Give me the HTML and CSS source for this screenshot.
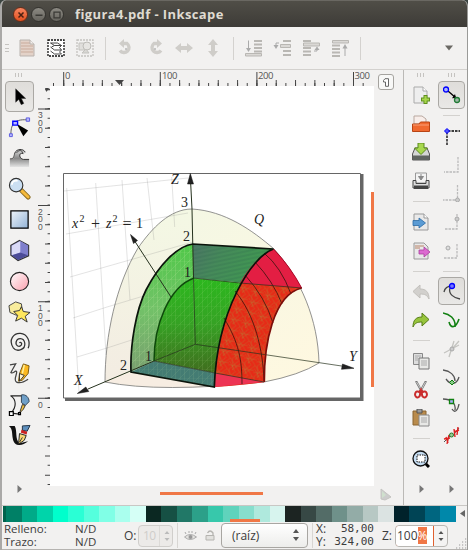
FILE: index.html
```html
<!DOCTYPE html>
<html lang="es">
<head>
<meta charset="utf-8">
<title>figura4.pdf - Inkscape</title>
<link rel="stylesheet" href="styles.css">
</head>
<body>
<div class="window">
  <header class="titlebar">
    <span class="wbtn close"><svg width="14" height="14" viewBox="0 0 14 14"><path d="M4.5 4.5l5 5M9.5 4.5l-5 5" stroke="#4c2012" stroke-width="1.5"/></svg></span>
    <span class="wbtn"><svg width="14" height="14" viewBox="0 0 14 14"><path d="M3.5 7.2h7" stroke="#3b3a36" stroke-width="1.5"/></svg></span>
    <span class="wbtn"><svg width="14" height="14" viewBox="0 0 14 14"><path d="M4 4.2h6v5.6H4z" fill="none" stroke="#3b3a36" stroke-width="1.3"/></svg></span>
    <h1>figura4.pdf - Inkscape</h1>
  </header>

  <div class="toolbar">
    <i class="grip"></i>
    <svg class="tb" viewBox="0 0 18 18"><path d="M2 1h10l4 4v12H2z" fill="#e3d2c8" stroke="#b9b3ae"/><path d="M3 4h9M3 7h12M3 10h12M3 13h12" stroke="#c9ab9b" stroke-width="1"/><path d="M12 1v4h4" fill="#f4efec" stroke="#b9b3ae"/></svg>
    <svg class="tb" viewBox="0 0 18 18"><rect x="1" y="1" width="16" height="16" fill="#fff" stroke="#111" stroke-width="1.3" stroke-dasharray="2 1"/><path d="M3.500 4h7l4 2.500H7.500zM3.500 8l4 3h7M3.500 12l4 3h7M7.500 6.500l-3 1.500M14.500 6.500l-2 2 2 2.500-2 2 2 2" fill="none" stroke="#333" stroke-width=".9"/></svg>
    <svg class="tb" viewBox="0 0 18 18"><rect x="1" y="1" width="16" height="16" fill="none" stroke="#c3c2be" stroke-width="1.3" stroke-dasharray="2 1"/><path d="M3 4h6v7H3z" fill="#e0dfdc" stroke="#c3c2be"/><circle cx="11" cy="7" r="4" fill="#e6e5e2" stroke="#bdbcb8"/><path d="M6 14l4-4 3 4z" fill="#d8d7d3" stroke="#c3c2be"/></svg>
    <i class="vsep"></i>
    <svg class="tb" viewBox="0 0 18 18"><path d="M6 4.500h4a5 5 0 1 1-7 7" fill="none" stroke="#cfcdc9" stroke-width="3.400"/><path d="M7 0v9L2 4.500z" fill="#cfcdc9"/><circle cx="9" cy="10" r="1.100" fill="#bbb"/></svg>
    <svg class="tb" viewBox="0 0 18 18"><path d="M12 4.500H8a5 5 0 1 0 7 7" fill="none" stroke="#cfcdc9" stroke-width="3.400"/><path d="M11 0v9l5-4.500z" fill="#cfcdc9"/><circle cx="9" cy="10" r="1.100" fill="#bbb"/></svg>
    <svg class="tb" viewBox="0 0 18 18"><path d="M0 9l6-5v3h6V4l6 5-6 5v-3H6v3z" fill="#cfcdc9"/></svg>
    <svg class="tb" viewBox="0 0 18 18"><path d="M9 0l5 6h-3v6h3l-5 6-5-6h3V6H4z" fill="#cfcdc9"/></svg>
    <i class="vsep"></i>
    <svg class="tb" viewBox="0 0 18 18"><path d="M10 2h8M10 5.500h8M10 9h8M10 12.500h8" stroke="#b9b7b3" stroke-width="2.200"/><path d="M1.500 14.500h16v2.500h-16z" fill="#dad8d5" stroke="#b9b7b3"/><path d="M4.500 1.500v9" stroke="#aaa"/><path d="M2 9h5l-2.500 4z" fill="#aaa"/></svg>
    <svg class="tb" viewBox="0 0 18 18"><path d="M10 2h8M10 12h8M10 16h8" stroke="#b9b7b3" stroke-width="2.200"/><path d="M7.500 5.500h10v3h-10z" fill="#dad8d5" stroke="#b9b7b3"/><path d="M6 4H3v3" fill="none" stroke="#aaa"/><path d="M.5 6h5L3 10z" fill="#aaa"/></svg>
    <svg class="tb" viewBox="0 0 18 18"><path d="M1 2h8M1 9h8M1 12.500h8M1 16h8" stroke="#b9b7b3" stroke-width="2.200"/><path d="M1.500 4h16v3h-16z" fill="#dad8d5" stroke="#b9b7b3"/><path d="M12 12h3v-2" fill="none" stroke="#aaa"/><path d="M12.500 11h5L15 7.500z" fill="#aaa"/></svg>
    <svg class="tb" viewBox="0 0 18 18"><path d="M1 6.500h8M1 10h8M1 13.500h8M1 17h8" stroke="#b9b7b3" stroke-width="2.200"/><path d="M1.500 1.500h16V4h-16z" fill="#dad8d5" stroke="#b9b7b3"/><path d="M14 8v9" stroke="#aaa"/><path d="M11.500 9.500h5L14 5z" fill="#aaa"/></svg>
    <i class="vsep"></i>
    <svg class="more" viewBox="0 0 8 6"><path d="M0 .5h8L4 5.500z" fill="#6b6964"/></svg>
  </div>

  <main class="work">
    <nav class="toolbox">
      <i class="hgrip"></i>
      <span class="tool on"><svg viewBox="0 0 24 24"><path d="M8 4v14l3.200-3 2.600 5.500 2.700-1.300-2.500-5.200H18.500z" fill="#000" stroke="#333" stroke-width=".5"/></svg></span>
      <span class="tool"><svg viewBox="0 0 24 24"><path d="M3 20C3 10 5 3 20 4" fill="none" stroke="#555"/><path d="M9 8l12 7-5 6z" fill="#000"/><g fill="#b8b8ff" stroke="#5b5be0"><path d="M1.500 18.500h3v3h-3zM19 2h3.500v3.500H19z"/><path d="M5 5.500h5v4H5z" stroke="#00f" stroke-width="1.400"/></g></svg></span>
      <span class="tool"><svg viewBox="0 0 24 24"><defs><linearGradient id="tw" x2="0" y2="1"><stop stop-color="#ddd"/><stop offset=".5" stop-color="#888"/><stop offset="1" stop-color="#e4e4e4"/></linearGradient></defs><path d="M2 22v-8c4 0 5-3 5-6 0-5 9-6 11-1l-2 1c-4-2-5 5 0 6h6v8z" fill="url(#tw)"/><path d="M2 13.500c4 0 4-2 5-6 2-5 9-5 11-1M9 7c3-4 7-2 6 1M16 8c-5-2-5 5 0 6h6" fill="none" stroke="#333"/></svg></span>
      <span class="tool"><svg viewBox="0 0 24 24"><path d="M14 14l7 7" stroke="#8a6a20" stroke-width="5" stroke-linecap="round"/><path d="M14.500 14.500l6.500 6.300" stroke="#f5b93a" stroke-width="3" stroke-linecap="round"/><circle cx="8.500" cy="8.500" r="7" fill="#cbdff2" stroke="#333" stroke-width="1.200"/><path d="M4 8c0-3 3-5 6-4" fill="none" stroke="#fff" stroke-width="2"/></svg></span>
      <span class="tool"><svg viewBox="0 0 24 24"><defs><linearGradient id="bl" x2="1" y2="1"><stop stop-color="#eef4fa"/><stop offset="1" stop-color="#93b3d6"/></linearGradient></defs><path d="M3 3h18v18H3z" fill="url(#bl)" stroke="#000" stroke-width="1.300"/></svg></span>
      <span class="tool"><svg viewBox="0 0 24 24"><path d="M12 1.500l9.500 5v11l-11 5L3 17V6.500z" fill="#9898dc" stroke="#333" stroke-width="1.200"/><path d="M13 2v12L4 17V7z" fill="#dadaf6"/><path d="M13 2l8 5v10l-8-3z" fill="#7f7fcc"/><path d="M4 17l9-3 8 3-10.500 5z" fill="#4c4c98"/></svg></span>
      <span class="tool"><svg viewBox="0 0 24 24"><defs><linearGradient id="pk" x2="1" y2="1"><stop stop-color="#fff"/><stop offset="1" stop-color="#fba0ae"/></linearGradient></defs><circle cx="12" cy="12" r="9.500" fill="url(#pk)" stroke="#222" stroke-width="1.200"/></svg></span>
      <span class="tool"><svg viewBox="0 0 24 24"><path d="M8 2l6 2 1 8-6 4-7-3-1-7z" fill="#f8ec9c" stroke="#444"/><path d="M14 7l2 5 7 1-5 4 2 6-6-4-6 3 2-6-4-4 6-1z" fill="#ffe75c" stroke="#333"/></svg></span>
      <span class="tool"><svg viewBox="0 0 24 24"><path d="M12 12.500c1-1.500 3 0 2 2-2 3-6.500 1-5.500-3 1-5 8-5 9 1 1 7-8 10-12 5C0 9 6 2 13 2.500 20 3 24 11 21 18" fill="none" stroke="#333" stroke-width="1.300"/></svg></span>
      <span class="tool"><svg viewBox="0 0 24 24"><path d="M2 3l6-1-5 9c2 2 5-3 6-1s-4 9 0 11 9-1 12-3" fill="none" stroke="#444" stroke-width="1.300"/><path d="M12 12l4-10 6 2-1 8-6 7-4 1z" fill="#fbb820" stroke="#7a5a10"/><path d="M12 12l5 2-5 6z" fill="#fff3d0" stroke="#333"/><path d="M17 3l-2 9" stroke="#fff1a0" stroke-width="1.500"/></svg></span>
      <span class="tool"><svg viewBox="0 0 24 24"><path d="M2.500 3h12M3 3c6 4 6 12 0 18l9 1" fill="none" stroke="#222" stroke-width="1.200"/><path d="M14 2c5-1 8 3 8 7l-4 4-4-3z" fill="#6e9fc8" stroke="#345"/><path d="M15 12l3 1-2 4-4 4z" fill="#f0c040" stroke="#333"/><path d="M1.500 19.500h4v4h-4zM11 20.500h2v2h-2z" fill="#fff" stroke="#000" stroke-width="1.300"/></svg></span>
      <span class="tool"><svg viewBox="0 0 24 24"><path d="M1 2h6c3 5 0 14 5 18l9-2c-7 6-15 5-16-3C4 10 5 5 1 2z" fill="#111"/><path d="M15 2l8-.5-3 6-5-1z" fill="#5d8fbd" stroke="#234"/><path d="M14 6l6 2-.5 3-6-2z" fill="#c22"/><path d="M12 10l7 2-2 5-6 4z" fill="#f7d774" stroke="#222"/><path d="M12 19l3-5" stroke="#333"/></svg></span>
      <svg class="expander" viewBox="0 0 5 8"><path d="M.5 0v8l4.500-4z" fill="#777"/></svg>
    </nav>

    <section class="stage">
      <svg class="ruler-h" width="338" height="16" viewBox="36 70 338 16">
        <path d="M63.200 84.500H370" stroke="#444" stroke-width="3" stroke-dasharray="1 8.660" fill="none"/>
        <path d="M63.200 83H370" stroke="#444" stroke-width="6" stroke-dasharray="1 18.320" fill="none"/>
        <path d="M63.200 79H370" stroke="#444" stroke-width="14" stroke-dasharray="1 95.600" fill="none"/>
        <path d="M53.500 86v-3" stroke="#444"/>
        <path d="M115 80h9l-4.500 5z" fill="#444"/>
        <g class="rnum"><text x="65" y="78.500">0</text><text x="162" y="78.500">100</text><text x="258" y="78.500">200</text><text x="354.500" y="78.500">300</text></g>
      </svg>
      <svg class="ruler-v" width="14" height="400" viewBox="36 86 14 400">
        <path d="M48.800 398.200V86" stroke="#444" stroke-width="2.400" stroke-dasharray="1 8.640" fill="none"/>
        <path d="M47.500 398.700V86M47.500 397.700V486" stroke="#444" stroke-width="5" stroke-dasharray="1 18.280" fill="none"/>
        <path d="M48.800 406.900V486" stroke="#444" stroke-width="2.400" stroke-dasharray="1 18.280" fill="none"/>
        <path d="M44 398.700V86" stroke="#444" stroke-width="12" stroke-dasharray="1 95.400" fill="none"/>
        <path d="M45 88h4l-2.500 4z" fill="#444"/>
        <g class="vnum"><text x="38" y="118">3</text><text x="38" y="125.500">0</text><text x="38" y="133">0</text><text x="38" y="214.500">2</text><text x="38" y="222">0</text><text x="38" y="229.500">0</text><text x="38" y="311">1</text><text x="38" y="318.500">0</text><text x="38" y="326">0</text><text x="38" y="407.500">0</text></g>
      </svg>
      <svg class="canvas" width="324" height="400" viewBox="50 86 324 400">
        <defs>
          <linearGradient id="dome" x2="1" y2="1"><stop offset=".2" stop-color="#f4f7e4"/><stop offset="1" stop-color="#fff8e0"/></linearGradient>
          <linearGradient id="domeL" x2="0" y2="1"><stop stop-color="#f4f8e4"/><stop offset="1" stop-color="#f3ece2"/></linearGradient>
          <linearGradient id="lune" x2="0" y2="1"><stop stop-color="#4fc848"/><stop offset=".5" stop-color="#72c268"/><stop offset="1" stop-color="#7aa070"/></linearGradient>
          <linearGradient id="core" x2="0" y2="1"><stop stop-color="#2cb81e"/><stop offset=".45" stop-color="#35a324"/><stop offset="1" stop-color="#416a1e"/></linearGradient>
          <linearGradient id="roof" x2="1" y2=".3"><stop stop-color="#4c7565"/><stop offset=".4" stop-color="#468a5a"/><stop offset="1" stop-color="#3f9a50"/></linearGradient>
          <pattern id="mesh" width="9" height="9" patternUnits="userSpaceOnUse"><path d="M0 0h9M0 0v9M0 9l9-9M4.500 0v9" stroke="#c8f0a8" stroke-width=".5" opacity=".35" fill="none"/></pattern>
          <pattern id="rmesh" width="13" height="11" patternUnits="userSpaceOnUse" patternTransform="rotate(17)"><path d="M0 0l13 11M13 0L5 11M0 7l13-2M2 0l4 11M0 3l8 8M9 0l-7 11" stroke="#b08838" stroke-width=".6" opacity=".55" fill="none"/></pattern>
          <pattern id="stripe" width="8" height="4" patternUnits="userSpaceOnUse" patternTransform="rotate(-12)"><path d="M0 1h8" stroke="#24604a" stroke-width="1" opacity=".35"/></pattern>
        </defs>
        <path d="M65 399.500h297V174" fill="none" stroke="#666" stroke-width="3"/>
        <path d="M63.500 173.500h297V398h-297z" fill="#fff" stroke="#666"/>
        <path d="M105 382C105 335 116 285 138 248C152 228 170 209 192 209C225 211 252 230 274 249C301 279 318 320 319 363Q300 375 264 382Q160 393 105 382z" fill="url(#dome)"/>
        <path d="M105 382C105 335 116 285 138 248C152 228 170 209 192 209L195 344z" fill="url(#domeL)"/>
        <path d="M105 382l26-10 84 15q-60 3-110-5z" fill="#f7ede2"/>
        <g fill="none" stroke="#8a8a8a" stroke-width=".7" opacity=".34"><path d="M66.700 188L79 393M95.700 183L106 355M122 180L130 300M147 178l7 62M171.700 177l3 50M64 191l124-13M66 234l122-21M70 277l123-35M73 318l34-11 50-15M77 357l30-9 40-13"/></g>
        <path d="M105 382C105 335 116 285 138 248C152 228 170 209 192 209C225 211 252 230 274 249C301 279 318 320 319 363Q300 375 264 382Q160 393 105 382z" fill="none" stroke="#777" stroke-width=".8"/>
        <path d="M131 372C130 345 136 310 146 290C159 265 177 246 193 244V278C169 287 154 325 154 361z" fill="url(#lune)"/>
        <path d="M131 372C130 345 136 310 146 290C159 265 177 246 193 244V278C169 287 154 325 154 361z" fill="url(#mesh)"/>
        <path d="M154 361C154 325 169 287 194 278L255 284 230 376z" fill="url(#core)"/>
        <path d="M154 361C154 325 169 287 194 278L255 284 230 376z" fill="url(#mesh)" opacity=".6"/>
        <path d="M193 244l80.500 5L260 284.500 193 278z" fill="url(#roof)"/>
        <path d="M193 244l80.500 5L260 284.500 193 278z" fill="url(#stripe)"/>
        <path d="M154 361l61 12-.7 14L131 372z" fill="#447c73"/>
        <path d="M154 361l61 12-.7 14L131 372z" fill="url(#mesh)" opacity=".5"/>
        <path d="M273.500 249C252 256 217 310 214.300 387Q245 385 264.300 382C264 345 273 295 301.700 288Q290 266 273.500 249z" fill="#e62b17"/>
        <path d="M240 283C227 303 217 340 215 373l49 9C264 345 273 295 301.700 288z" fill="url(#rmesh)"/>
        <path d="M273.500 249Q255 257 240 283l61.700 5Q290 266 273.500 249z" fill="#e31e43"/>
        <path d="M215 373l49.500 9-50 5z" fill="#ed3454"/>
        <g fill="none" stroke="#35150c" stroke-width=".8"><path d="M264 253Q281 267 291 294M255 262Q273 281 282 304M245 275Q265 297 273 323M235 291C255 315 263 350 264 381M224 318C239 343 242 360 242 384"/></g>
        <g fill="none" stroke="#26321e" stroke-width=".7">
          <path d="M193.500 278L195.300 344.300L154 361M195.300 344.300L345 366.500" />
          <path d="M193 278l47 5 62 5M154 361l61 12 49 9" stroke-width=".7"/>
          <path d="M190.500 180l1.500 29 1.500 69M154 361l-66 28" stroke-width="1"/>
          <path d="M134 240L171 297" stroke-width="1"/>
        </g>
        <g fill="none" stroke="#0b140b" stroke-width="1.700">
          <path d="M131 372C130 345 136 310 146 290C159 265 177 246 193 244L273.500 249C252 256 217 310 214.300 387z"/>
          <path d="M154 361C154 325 169 287 194 278" stroke-width="1.500" stroke="#0d4a0a"/>
          <path d="M264.300 382C264 345 273 295 301.700 288" stroke="#7c0d0a" stroke-width="1.700"/>
          <path d="M273.500 249Q290 266 301.700 288" stroke="#902" stroke-width=".8"/>
        </g>
        <g fill="#222" stroke="#111" stroke-width=".5"><path d="M190.300 173.500l3.200 10.500h-6zM354 368.300l-12.500 1 1-5.300zM77.300 393.500l8.500-6.500 3 4.500zM130.500 234.500l7 6-4 3z"/></g>
        <g class="math">
          <text x="171" y="183.500" class="it">Z</text><text x="254" y="224" class="it">Q</text><text x="349" y="361" class="it">Y</text><text x="74" y="385" class="it">X</text>
          <text x="181" y="207">3</text><text x="183" y="241">2</text><text x="184" y="276.500">1</text><text x="145" y="361">1</text><text x="120" y="369.500">2</text>
          <text x="72" y="227.500" class="it">x</text><text x="79.500" y="222" class="sup">2</text><text x="91" y="229" class="plus">+</text><text x="106" y="227.500" class="it">z</text><text x="112.500" y="222" class="sup">2</text><text x="122.500" y="229" class="plus">=</text><text x="136" y="227.500">1</text>
        </g>
      </svg>
      <div class="hscroll"><i></i></div>
    </section>

    <aside class="vscroll">
      <span class="zoomlock"><svg width="6" height="9" viewBox="0 0 6 9"><path d="M.5 2.500L2 .7h3.500v7.600H2.500V4h-2z" fill="#fff" stroke="#666"/></svg></span>
      <i class="thumb"></i>
      <svg class="cms" viewBox="0 0 12 13"><path d="M1 1l10 8-6 3-4-1z" fill="#ccc" stroke="#c4c4c0"/><path d="M2 3l4 4-4 3z" fill="#cfe0cd"/></svg>
    </aside>

    <nav class="commands">
      <i class="hgrip"></i>
      <span class="cmd"><svg viewBox="0 0 18 18"><path d="M2 1h9l4 4v12H2z" fill="#eee" stroke="#aaa"/><path d="M11 1v4h4" fill="#fff" stroke="#aaa"/><path d="M13.500 9v9M9 13.500h9" stroke="#5f8f1e" stroke-width="4"/><path d="M13.500 10v7M10 13.500h7" stroke="#a6d64a" stroke-width="2.200"/></svg></span>
      <span class="cmd"><svg viewBox="0 0 18 18"><path d="M2 1h8l4 3v5H2z" fill="#f8eeea" stroke="#b9a8a0"/><path d="M.5 16.500V9H7l1.500-2h9v9.500z" fill="#f0692f" stroke="#b84414"/><path d="M1 10h16" stroke="#f9a079"/></svg></span>
      <span class="cmd"><svg viewBox="0 0 18 18"><path d="M3 5h12l2.500 6v6H.5v-6z" fill="#d5d7d5" stroke="#555"/><path d="M.5 12.500h17V17H.5z" fill="#606561"/><path d="M6 0h6v5h3.500L9 11.500 2.500 5H6z" fill="#a8d84e" stroke="#5b8a1c"/></svg></span>
      <span class="cmd"><svg viewBox="0 0 18 18"><path d="M3.500 1h11v10h-11z" fill="#f3f3f3" stroke="#999"/><path d="M9 2v3M6.500 4.500h5L9 8z" stroke="#888" fill="#888"/><path d="M1 8.500h3v3h10v-3h3V16H1z" fill="#ddd" stroke="#444"/><path d="M2 13.500h14V17H2z" fill="#444"/></svg></span>
      <i class="hsep"></i>
      <span class="cmd"><svg viewBox="0 0 18 18"><path d="M2 1h10l4 4v12H2z" fill="#e9e9e9" stroke="#999"/><path d="M12 1v4h4" fill="#fff" stroke="#999"/><path d="M1 7.500h6V5l6.500 5L7 15v-2.500H1z" fill="#5a9bd4" stroke="#2c6ba5" stroke-width=".8"/></svg></span>
      <span class="cmd"><svg viewBox="0 0 18 18"><path d="M2 1h10l4 4v12H2z" fill="#e9e9e9" stroke="#999"/><path d="M3 4h9M3 6h5" stroke="#c9a593" stroke-width="1.500"/><path d="M7 8h5V5l6 5-6 5v-3H7z" fill="#dc6ad0" stroke="#aa3f9e" stroke-width=".8"/></svg></span>
      <i class="hsep"></i>
      <span class="cmd"><svg viewBox="0 0 18 18"><path d="M8 2v4c6 0 9 3 9 10-2-4-4-5-9-5v4L1 8.500z" fill="#d2d0cd" stroke="#c2c0bc"/></svg></span>
      <span class="cmd"><svg viewBox="0 0 18 18"><path d="M10 2v4C4 6 1 9 1 16c2-4 4-5 9-5v4l7-6.500z" fill="#97c43c" stroke="#567d16"/></svg></span>
      <i class="hsep"></i>
      <span class="cmd"><svg viewBox="0 0 18 18"><path d="M1.500 1.500h9v11h-9z" fill="#ddd" stroke="#888"/><path d="M7 6h10v11H7z" fill="#e8e8e6" stroke="#777"/><path d="M3 4h6M3 6h3M3 8h3M9 9h6M9 11h6M9 13h6" stroke="#aaa"/></svg></span>
      <span class="cmd"><svg viewBox="0 0 18 18"><path d="M4 0l6 11M14 0L8 11" stroke="#777" stroke-width="2.200"/><path d="M4.500 1l6 10M13.500 1l-5.500 10" stroke="#ddd" stroke-width=".8"/><path d="M8.500 9.500L7 11a2.500 3 0 1 0 1 3zM9.500 9.500L11 11a2.500 3 0 1 1-1 3z" fill="none" stroke="#ca2c2c" stroke-width="2"/></svg></span>
      <span class="cmd"><svg viewBox="0 0 18 18"><path d="M1 2h13v14H1z" fill="#b98b4c" stroke="#8a6530"/><path d="M5 0h5v4H5z" fill="#999" stroke="#555"/><path d="M7 6h10v11H7z" fill="#e8e8e6" stroke="#888"/><path d="M9 9h6M9 11h6M9 13h6" stroke="#aaa"/></svg></span>
      <i class="hsep"></i>
      <span class="cmd"><svg viewBox="0 0 18 18"><path d="M13 13l4 4" stroke="#000" stroke-width="3"/><circle cx="8.500" cy="8.500" r="7.500" fill="#c5dcf1" stroke="#111" stroke-width="1.300"/><path d="M5 5h8v7H5z" fill="#fff" stroke="#111" stroke-dasharray="1.500 1"/></svg></span>
      <svg class="expander" viewBox="0 0 5 8"><path d="M.5 0v8l4.500-4z" fill="#777"/></svg>
    </nav>

    <nav class="snap">
      <i class="hgrip"></i>
      <span class="cmd on"><svg viewBox="0 0 18 18"><path d="M5 5l8 7" stroke="#000" stroke-width="1.300"/><path d="M12 8l1 4-4 .2z"/><circle cx="3" cy="3.500" r="2.500" fill="#aab4ff" stroke="#00f" stroke-width="1.300"/><circle cx="14" cy="14" r="2.500" fill="#9cb8a4" stroke="#207a35" stroke-width="1.300"/></svg></span>
      <i class="hsep"></i>
      <span class="cmd"><svg viewBox="0 0 18 18"><path d="M5 4h12M4 5v13" stroke="#000" stroke-width="1.300" stroke-dasharray="2.500 1"/><path d="M4 1.500L6.500 4 4 6.500 1.500 4z" fill="#55f" stroke="#00f"/></svg></span>
      <span class="cmd"><svg viewBox="0 0 18 18"><path d="M15 1v15H1" fill="none" stroke="#bbb" stroke-width="1.300" stroke-dasharray="2.500 1"/></svg></span>
      <span class="cmd"><svg viewBox="0 0 18 18"><path d="M14.500 1v15H0" fill="none" stroke="#bbb" stroke-width="1.300" stroke-dasharray="2.500 1"/><circle cx="14.500" cy="16" r="2" fill="#ccc" stroke="#aaa"/></svg></span>
      <span class="cmd"><svg viewBox="0 0 18 18"><path d="M14 1v15H1" fill="none" stroke="#bbb" stroke-width="1.300" stroke-dasharray="2.500 1"/><circle cx="14" cy="6" r="2" fill="#ccc" stroke="#aaa"/></svg></span>
      <span class="cmd"><svg viewBox="0 0 18 18"><path d="M14 2v14H1" fill="none" stroke="#bbb" stroke-width="1.300" stroke-dasharray="2.500 1"/><circle cx="5" cy="6" r="2" fill="#ddd" stroke="#aaa"/></svg></span>
      <i class="hsep"></i>
      <span class="cmd on"><svg viewBox="0 0 18 18"><path d="M1 10c1-5 4-6 8-6M7 6c-2 6 4 10 10 11" fill="none" stroke="#444" stroke-width="1.300"/><circle cx="9" cy="4" r="2.500" fill="#77f" stroke="#00f" stroke-width="1.300"/></svg></span>
      <span class="cmd"><svg viewBox="0 0 18 18"><path d="M0 2c6 1 13 5 12 14M6 11c2 7 7 6 10-3" fill="none" stroke="#128012" stroke-width="1.600"/></svg></span>
      <span class="cmd"><svg viewBox="0 0 18 18"><path d="M1 13L16 5M11 1L6 17M16 1L9 9" stroke="#c4c4c0" stroke-width="1.300"/><circle cx="9" cy="9" r="2" fill="#ccc" stroke="#aaa"/></svg></span>
      <span class="cmd"><svg viewBox="0 0 18 18"><path d="M0 2c7 1 12 5 12 11M3 11c5 7 11 5 13-2" fill="none" stroke="#555" stroke-width="1.300"/><path d="M9 12l2.500 2.500L9 17l-2.500-2.500z" fill="#8c8" stroke="#107a10"/></svg></span>
      <span class="cmd"><svg viewBox="0 0 18 18"><path d="M0 2c8 0 13 4 12 11M9 12c3 5 6 1 7-5" fill="none" stroke="#555" stroke-width="1.300"/><path d="M6.500 2.500h4v4h-4z" fill="#aaf" stroke="#108010" stroke-width="1.300"/></svg></span>
      <span class="cmd"><svg viewBox="0 0 18 18"><path d="M1 16l6-6M11 8l5-6" stroke="#555"/><path d="M3 11l2 6M6 9L4 18M11 3l1 8M15 1l-1 8M1 13l6-1M11 6l5-2" stroke="#d22" stroke-width="1.400"/><circle cx="8.500" cy="9" r="2" fill="#9c9" stroke="#287a28"/></svg></span>
      <svg class="expander" viewBox="0 0 5 8"><path d="M.5 0v8l4.500-4z" fill="#777"/></svg>
    </nav>
  </main>

  <div class="palette">
    <i class="c0"></i><i class="c1"></i><i class="c2"></i><i class="c3"></i><i class="c4"></i><i class="c5"></i><i class="c6"></i><i class="c7"></i><i class="c8"></i><i class="c9"></i><i class="c10"></i><i class="c11"></i><i class="c12"></i><i class="c13"></i><i class="c14"></i><i class="c15"></i><i class="c16"></i><i class="c17"></i><i class="c18"></i><i class="c19"></i><i class="c20"></i><i class="c21"></i><i class="c22"></i><i class="c23"></i><i class="c24"></i><i class="c25"></i><i class="c26"></i><i class="c27"></i><i class="c28"></i><i class="c29"></i>
    <svg width="5" height="7" viewBox="0 0 5 7"><path d="M5 0v7L0 3.500z" fill="#666"/></svg>
    <b class="pthumb"></b>
  </div>

  <footer class="status">
    <div class="pair style"><span>Relleno:</span><span>N/D</span><span>Trazo:</span><span>N/D</span></div>
    <span class="lbl olbl">O:</span>
    <div class="spin off"><span>10</span><svg viewBox="0 0 6 12"><path d="M3 1l2.500 3h-5zM3 11l2.500-3h-5z" fill="#bbb"/></svg></div>
    <i class="ssep"></i>
    <svg class="eye" viewBox="0 0 13 10"><path d="M.5 6Q6 1 12.500 6 6 11 .5 6z" fill="#e4e3e0" stroke="#aaa"/><circle cx="6.500" cy="6" r="2" fill="#999"/><path d="M2 3L1 1M5 2V0M8 2V0M11 3l1-2" stroke="#aaa"/></svg>
    <svg class="lock" viewBox="0 0 10 11"><path d="M1 5.500h8V10H1z" fill="#e2e1de" stroke="#b5b4b0"/><path d="M8 5V3Q5-1 2.500 3" fill="none" stroke="#b5b4b0" stroke-width="1.300"/></svg>
    <div class="combo"><span>(raíz)</span><svg viewBox="0 0 6 12"><path d="M3 0l3 4H0zM3 12l3-4H0z" fill="#555"/></svg></div>
    <i class="ssep s2"></i>
    <div class="pair coords"><span>X:</span><span class="num">58,00</span><span>Y:</span><span class="num">324,00</span></div>
    <span class="lbl zlbl">Z:</span>
    <div class="spin zoom"><span>100<mark>%</mark></span><svg viewBox="0 0 6 12"><path d="M3 1l2.500 3h-5zM3 11l2.500-3h-5z" fill="#555"/></svg></div>
    <svg class="resize" viewBox="0 0 11 11"><path d="M9 1h1.200M6 4h4.200M3 7h7.200M0 10h10.200" stroke="#999" stroke-width="1.200" stroke-dasharray="1.200 1.800"/></svg>
  </footer>
</div>
</body>
</html>
```
FILE: styles.css
```css
* { box-sizing: border-box; }
body { margin: 0; background: #3b4440; }
svg { display: block; flex: none; }
i { display: block; flex: none; }
.window { width: 468px; height: 550px; display: flex; flex-direction: column; background: #f2f1f0; border-left: 2px solid #aaa9a7; border-right: 1px solid #9a9a98; border-radius: 6px 6px 0 0; overflow: hidden; font-family: "Open Sans", "Noto Sans", sans-serif; color: #3c3c3c; }

.titlebar { height: 27px; flex: none; display: flex; align-items: center; gap: 3px; padding: 1px 0 0 11px; background: linear-gradient(#504e47, #3d3b37); border-top: 1px solid #6a6862; }
.wbtn { width: 15px; height: 15px; border-radius: 50%; background: linear-gradient(#8b8982, #66645e); border: 1px solid #33322e; display: flex; align-items: center; justify-content: center; flex: none; }
.wbtn.close { background: linear-gradient(#f68560, #e2501f); border-color: #6a2d18; }
.titlebar h1 { margin: 0 0 2px 8px; font-size: 13px; line-height: 18px; font-weight: 700; letter-spacing: .4px; color: #dfdbd2; white-space: nowrap; }

.toolbar { height: 43px; flex: none; display: flex; align-items: center; border-bottom: 1px solid #d3d1ce; padding-left: 3px; }
.grip { width: 4px; height: 8px; margin-right: 9px; background: repeating-linear-gradient(#c5c3c0 0 1px, transparent 1px 3.500px); }
.tb { width: 18px; height: 18px; margin-right: 11px; }
.vsep { width: 1px; height: 23px; background: #d4d2cf; }
.toolbar .vsep { margin-right: 10.700px; }
.more { width: 8px; height: 6px; margin-left: 73px; }

.work { height: 435px; flex: none; display: flex; }
.hgrip { width: 8px; height: 4px; margin-top: 3px; margin-bottom: 4px; background: repeating-linear-gradient(90deg, #c5c3c0 0 1px, transparent 1px 3px); }
.toolbox { width: 34px; flex: none; display: flex; flex-direction: column; align-items: center; }
.tool { width: 29px; height: 30.800px; flex: none; display: flex; align-items: center; justify-content: center; }
.tool svg { width: 23px; height: 23px; }
.on { border: 1px solid #aaa8a4; border-radius: 4px; background: linear-gradient(#dfddda, #e9e8e6); }
.expander { width: 5px; height: 8px; margin-top: auto; margin-bottom: 12px; }

.stage { width: 338px; flex: none; display: flex; flex-direction: row; flex-wrap: wrap; align-content: flex-start; }
.canvas { background: #fff; }
.rnum { font: 9.500px "Open Sans", sans-serif; letter-spacing: -.4px; fill: #555; }
.vnum { font: 8.500px "Liberation Sans", sans-serif; fill: #555; }
.math { font: 14px "Liberation Serif", serif; fill: #222; }
.math .it { font-style: italic; }
.math .sup { font-size: 10px; }
.math .plus { font-size: 16px; }
.hscroll { width: 338px; height: 19px; padding: 6px 0 0 124px; }
.hscroll i { width: 103px; height: 3px; background: #f07746; }

.vscroll { width: 30px; flex: none; border-right: 1px solid #bbb9b6; display: flex; flex-direction: column; align-items: center; position: relative; }
.zoomlock { width: 16px; height: 16px; margin: 4px 6px 0 0; border: 1px solid #a5a39f; border-radius: 3px; background: #f8f8f7; display: flex; align-items: center; justify-content: center; }
.thumb { position: absolute; left: -3px; top: 122px; width: 3px; height: 195px; background: #f07746; }
.cms { width: 12px; height: 13px; margin-top: auto; margin-bottom: 4px; margin-right: 6px; }

.commands, .snap { flex: none; display: flex; flex-direction: column; align-items: center; }
.commands { width: 34px; }
.snap { width: 27px; }
.cmd { width: 27px; height: 28.600px; flex: none; display: flex; align-items: center; justify-content: center; }
.cmd svg { width: 18px; height: 18px; }
.cmd.on { height: 27.600px; margin-bottom: 1px; }
.hsep { width: 17px; height: 1px; margin: 5.700px 0; background: #d3d1ce; }

.palette { height: 17px; flex: none; display: flex; border-top: 1px solid #c9c7c4; padding-left: 1px; position: relative; align-items: stretch; }
.palette i { width: 15.500px; }
.palette svg { margin: 4px 0 0 4px; }
.pthumb { position: absolute; left: 228px; top: 13px; width: 30px; height: 3px; background: #f07746; }
.palette .c0 { width: 3px; background: #00624c; }
.c1 { background: #008066; } .c2 { background: #0a8; } .c3 { background: #00d4aa; } .c4 { background: #0fc; }
.c5 { background: #2affd5; } .c6 { background: #5fd; } .c7 { background: #80ffe6; } .c8 { background: #afe; }
.c9 { background: #d5fff6; } .c10 { background: #0b2822; } .c11 { background: #165044; } .c12 { background: #217867; }
.c13 { background: #2ca089; } .c14 { background: #37c8ab; } .c15 { background: #5fd3bc; } .c16 { background: #87decd; }
.c17 { background: #afe9dd; } .c18 { background: #d7f4ee; } .c19 { background: #1c2422; } .c20 { background: #374845; }
.c21 { background: #536c67; } .c22 { background: #6f918a; } .c23 { background: #93aca7; } .c24 { background: #b7c8c4; }
.c25 { background: #dbe3e2; } .c26 { background: #00222b; } .c27 { background: #045; } .c28 { background: #006680; }
.c29 { background: #08a; }

.status { flex: 1; display: flex; align-items: center; font-size: 12px; border-bottom: 1px solid #b5b3b0; }
.pair { display: grid; line-height: 13px; margin-bottom: 1px; white-space: nowrap; flex: none; }
.style { grid-template-columns: 71px 34px; padding-left: 2px; font-size: 11.500px; }
.coords { grid-template-columns: 15px 43px; font-size: 12px; }
.num { font-family: "DejaVu Sans Mono", monospace; font-size: 11px; text-align: right; }
.lbl { flex: none; }
.olbl { width: 14px; margin-left: 15px; }
.spin { height: 22px; width: 35px; flex: none; display: flex; align-items: center; border: 1px solid #b9b7b3; border-radius: 4px; overflow: hidden; }
.spin span { height: 100%; display: flex; align-items: center; padding-left: 4px; border-right: 1px solid #c9c7c4; }
.spin svg { width: 6px; height: 12px; margin-left: 4px; }
.off { color: #cfcdca; border-color: #d0cecb; background: #eceae8; }
.off span { width: 21px; letter-spacing: -.5px; border-color: #dcdad7; }
.ssep { width: 1px; height: 25px; margin-left: 4px; background: #d8d6d3; }
.eye { width: 13px; height: 10px; margin-left: 6px; }
.lock { width: 10px; height: 11px; margin-left: 8px; }
.combo { width: 87px; height: 25px; flex: none; margin-left: 6px; padding: 0 8px 1px 10px; display: flex; align-items: center; justify-content: space-between; border: 1px solid #a8a6a2; border-radius: 4px; background: linear-gradient(#fff, #ededeb); }
.combo svg { width: 6px; height: 12px; }
.s2 { margin-right: 3px; }
.zlbl { width: 13px; margin-left: 8px; }
.zoom { width: 53px; background: #f4f3f2; }
.zoom span { width: 39px; flex: none; margin-left: -1px; height: 22px; padding-left: 1px; background: #fff; border: 1.500px solid #e0602f; border-radius: 3px 0 0 3px; }
.zoom mark { background: #f07746; color: #fff; line-height: 17px; letter-spacing: -.6px; }
.resize { width: 11px; height: 11px; margin: 15px 0 0 auto; }
```
